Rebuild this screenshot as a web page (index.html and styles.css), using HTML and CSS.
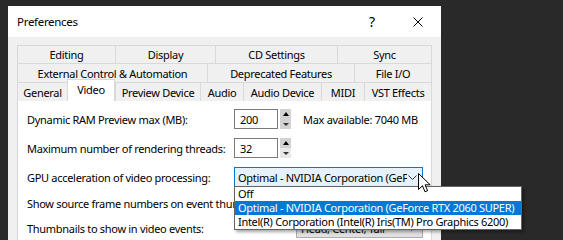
FILE: index.html
```html
<!DOCTYPE html>
<html>
<head>
<meta charset="utf-8">
<link rel="stylesheet" href="styles.css">
</head>
<body>
<div class="dialog">
  <div class="titlebar">
    <span class="title">Preferences</span>
    <span class="tbtn help">?</span>
    <span class="tbtn">
      <svg width="10" height="10" viewBox="0 0 10 10"><path d="M0.5 0.5 L9.5 9.5 M9.5 0.5 L0.5 9.5" stroke="#000" stroke-width="1" fill="none"/></svg>
    </span>
  </div>
  <div class="body">
    <div class="tabs">
      <div class="tabrow r1">
        <div class="tab">Editing</div>
        <div class="tab">Display</div>
        <div class="tab">CD Settings</div>
        <div class="tab">Sync</div>
      </div>
      <div class="tabrow r2">
        <div class="tab">External Control &amp; Automation</div>
        <div class="tab">Deprecated Features</div>
        <div class="tab">File I/O</div>
      </div>
      <div class="tabrow r3">
        <div class="tab">General</div>
        <div class="tab sel">Video</div>
        <div class="tab">Preview Device</div>
        <div class="tab">Audio</div>
        <div class="tab">Audio Device</div>
        <div class="tab">MIDI</div>
        <div class="tab">VST Effects</div>
      </div>
    </div>
    <div class="panel">
      <div class="row">
        <span class="label">Dynamic RAM Preview max (MB):</span>
        <div class="ctrl">
          <div class="num">200</div>
          <div class="spin"><span><i class="up"></i></span><span><i class="down"></i></span></div>
          <span class="avail">Max available: 7040 MB</span>
        </div>
      </div>
      <div class="row">
        <span class="label">Maximum number of rendering threads:</span>
        <div class="ctrl">
          <div class="num">32</div>
          <div class="spin s2"><span><i class="up"></i></span><span><i class="down"></i></span></div>
        </div>
      </div>
      <div class="row">
        <span class="label">GPU acceleration of video processing:</span>
        <div class="ctrl dd-wrap">
          <div class="dd">
            <span class="dd-text">Optimal - NVIDIA Corporation (GeForce RTX 2060 SUPER)</span>
            <svg class="chev" width="9" height="5" viewBox="0 0 9 5"><path d="M0.5 0.5 L4.5 4.5 L8.5 0.5" stroke="#333" fill="none"/></svg>
          </div>
          <div class="list">
            <div class="item">Off</div>
            <div class="item hi">Optimal - NVIDIA Corporation (GeForce RTX 2060 SUPER)</div>
            <div class="item">Intel(R) Corporation (Intel(R) Iris(TM) Pro Graphics 6200)</div>
          </div>
          <svg class="cursor" width="13" height="20" viewBox="0 0 13 20"><path d="M0.5 0.5 L0.5 16.5 L4.5 12.8 L7 18.8 L9.6 17.7 L7.1 11.8 L12.2 11.8 Z" fill="#fff" stroke="#000" stroke-width="1" stroke-linejoin="miter"/></svg>
        </div>
      </div>
      <div class="row r-4">
        <span class="label">Show source frame numbers on event thumbnails:</span>
        <div class="ctrl"></div>
      </div>
      <div class="row r-5">
        <span class="label">Thumbnails to show in video events:</span>
        <div class="ctrl">
          <div class="combo">
            <span>Head, Center, Tail</span>
            <svg class="chev" width="9" height="5" viewBox="0 0 9 5"><path d="M0.5 0.5 L4.5 4.5 L8.5 0.5" stroke="#333" fill="none"/></svg>
          </div>
        </div>
      </div>
    </div>
  </div>
</div>
</body>
</html>
```

FILE: styles.css
```css
* { box-sizing: border-box; }
html, body { margin: 0; padding: 0; }
body {
  background: #292929;
  font-family: "Noto Sans", "Open Sans", sans-serif;
  font-size: 11px;
  letter-spacing: -0.3px;
  color: #000;
  height: 240px;
  overflow: hidden;
}
.dialog {
  margin: 6px 0 0 8px;
  width: 433px;
  height: 234px;
  background: #f0f0f0;
}
.titlebar {
  height: 31px;
  background: #fff;
  display: flex;
  align-items: center;
}
.title { flex: 1; padding-left: 9px; font-size: 11.5px; }
.tbtn {
  width: 46px;
  height: 31px;
  display: flex;
  align-items: center;
  justify-content: center;
}
.help { font-size: 14px; letter-spacing: 0; }
.body { padding: 8px 9px 0; }
.tabrow {
  display: grid;
  height: 18px;
  border-right: 1px solid #d9d9d9;
}
.r1 { grid-template-columns: 98px 100px 122px 94px; }
.r2 { grid-template-columns: 190px 147px 77px; height: 19px; }
.r3 { grid-template-columns: 50px 48px 85px 43px 78px 43px 67px; }
.tab {
  border-left: 1px solid #d9d9d9;
  border-top: 1px solid #d9d9d9;
  display: flex;
  align-items: center;
  justify-content: center;
  white-space: nowrap;
  background: #f0f0f0;
}
.tab.sel {
  background: #fff;
  margin-top: -3px;
  height: 22px;
  position: relative;
  z-index: 1;
  border-right: 1px solid #d9d9d9;
  padding-bottom: 2px;
}
.panel {
  background: #fff;
  border: 1px solid #d9d9d9;
  height: 141px;
  padding: 8px 0 0 9px;
}
.row {
  display: grid;
  grid-template-columns: 207px auto;
  align-items: center;
  height: 20px;
  white-space: nowrap;
}
.row + .row { margin-top: 9px; }
.row.r-4 { margin-top: 6px; }
.row.r-5 { margin-top: 5px; }
.ctrl { display: flex; align-items: center; height: 20px; }
.num {
  width: 44px;
  height: 20px;
  border: 1px solid #7a7a7a;
  padding-left: 5px;
  display: flex;
  align-items: center;
  background: #fff;
}
.spin {
  width: 11px;
  height: 20px;
  margin-left: 2px;
  display: flex;
  flex-direction: column;
}
.spin span {
  flex: 1;
  background: #d2d2d2;
  display: flex;
  align-items: center;
  justify-content: center;
}
.spin.s2 span + span { background: #e8e8e8; }
.up, .down {
  width: 0;
  height: 0;
  border-left: 3px solid transparent;
  border-right: 3px solid transparent;
}
.up { border-bottom: 4px solid #000; }
.down { border-top: 3px solid #333; }
.avail { margin-left: 12px; }
.dd-wrap { position: relative; }
.dd {
  width: 189px;
  height: 20px;
  background: #e5f1fb;
  border: 1px solid #0078d7;
  display: flex;
  align-items: center;
  padding: 0 5px 0 3px;
}
.dd-text { flex: 1; overflow: hidden; white-space: nowrap; margin-right: 1px; }
.chev { flex: none; }
.list {
  position: absolute;
  left: 0;
  top: 19px;
  width: 288px;
  background: #fff;
  border: 1px solid #646464;
  box-shadow: 2px 2px 3px rgba(0, 0, 0, 0.35);
  z-index: 5;
}
.item { height: 14px; line-height: 14px; padding-left: 3px; white-space: nowrap; }
.item.hi { background: #0078d7; color: #fff; }
.cursor { position: absolute; left: 184px; top: 6px; z-index: 6; }
.combo {
  margin-left: 62px;
  width: 127px;
  height: 20px;
  background: #e1e1e1;
  border: 1px solid #adadad;
  display: flex;
  align-items: center;
  justify-content: space-between;
  padding: 0 6px 0 4px;
}
```
